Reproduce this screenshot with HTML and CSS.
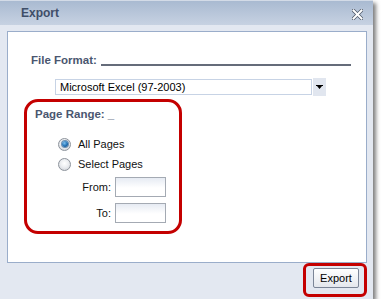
FILE: index.html
```html
<!DOCTYPE html>
<html>
<head>
<meta charset="utf-8">
<link rel="stylesheet" href="styles.css">
</head>
<body>
<div class="dialog">
  <div class="titlebar">
    <span class="title">Export</span>
    <svg class="close" width="11" height="11" viewBox="0 0 11 11">
      <path d="M1.5 1.5 L9.5 9.5 M9.5 1.5 L1.5 9.5" stroke="#4b5566" stroke-width="3.4" stroke-linecap="square"/>
      <path d="M1.5 1.5 L9.5 9.5 M9.5 1.5 L1.5 9.5" stroke="#ffffff" stroke-width="2" stroke-linecap="square"/>
    </svg>
  </div>
  <div class="panel">
    <div class="format">
      <span class="label">File Format:</span>
      <span class="rule"></span>
    </div>
    <div class="selectrow">
      <div class="selectfield">Microsoft Excel (97-2003)</div>
      <div class="selectbtn">
        <svg width="7" height="5" viewBox="0 0 7 5"><path d="M0 0 H7 V1 H6 L3.5 4 L1 1 H0 Z" fill="#000"/></svg>
      </div>
    </div>
    <div class="range">
      <div class="label rangelabel">Page Range: _</div>
      <div class="radiorow"><span class="radio on"></span><span class="rtext">All Pages</span></div>
      <div class="radiorow"><span class="radio"></span><span class="rtext">Select Pages</span></div>
      <div class="fieldrow first"><span class="flabel">From:</span><span class="input"></span></div>
      <div class="fieldrow"><span class="flabel">To:</span><span class="input"></span></div>
    </div>
  </div>
  <div class="footer">
    <div class="btnmark">
      <button class="btn">Export</button>
    </div>
  </div>
</div>
</body>
</html>
```

FILE: styles.css
```css
html, body {
  margin: 0;
  padding: 0;
  background: #ffffff;
}
body {
  font-family: "Liberation Sans", Arial, sans-serif;
}
.dialog {
  width: 373px;
  height: 299px;
  box-sizing: border-box;
  background: #e3e8f1;
  box-shadow: 3px 3px 4px rgba(0, 0, 0, 0.5);
  display: flex;
  flex-direction: column;
}
.titlebar {
  height: 25px;
  box-sizing: border-box;
  border-top: 1px solid #d3dbe7;
  background: linear-gradient(#a9bad1, #c7d2e2);
  display: flex;
  align-items: center;
  justify-content: space-between;
  padding: 0 10px 0 21px;
}
.title {
  font-weight: bold;
  font-size: 12px;
  line-height: 14px;
  color: #3f4e68;
}
.close {
  display: block;
  margin-top: 3px;
}
.panel {
  margin: 6px 6px 0 7px;
  height: 232px;
  box-sizing: border-box;
  border: 1px solid #9aadca;
  background: #ffffff;
}
.label {
  font-weight: bold;
  font-size: 11.5px;
  line-height: 14px;
  color: #4a5670;
}
.format {
  display: flex;
  align-items: flex-end;
  margin-top: 21px;
  padding: 0 15px 0 23px;
}
.rule {
  flex: 1;
  margin-left: 4px;
  margin-bottom: 1px;
  border-bottom: 2px solid #656c7a;
}
.selectrow {
  display: flex;
  align-items: center;
  margin: 11px 0 0 47px;
}
.selectfield {
  width: 257px;
  height: 16px;
  box-sizing: border-box;
  border: 1px solid #c7d3e5;
  font-size: 11px;
  line-height: 14px;
  padding-left: 4px;
  color: #000;
}
.selectbtn {
  width: 13px;
  height: 18px;
  margin-left: 1px;
  background: #e1e6ef;
  display: flex;
  align-items: center;
  justify-content: center;
}
.selectbtn svg {
  display: block;
}
.range {
  margin: 3px 0 0 16px;
  width: 158px;
  height: 135px;
  box-sizing: border-box;
  border: 3px solid #c40000;
  border-radius: 14px;
  padding: 5px 0 0 8px;
}
.rangelabel {
  margin-bottom: 13px;
}
.radiorow {
  height: 20px;
  display: flex;
  align-items: center;
  padding-left: 23px;
}
.radio {
  width: 13px;
  height: 13px;
  box-sizing: border-box;
  border-radius: 50%;
  border: 1px solid #8d939c;
  background: radial-gradient(circle at 50% 40%, #ffffff 0%, #eceef1 45%, #c9ccd2 100%);
  display: flex;
  align-items: center;
  justify-content: center;
}
.radio.on::after {
  content: "";
  width: 6px;
  height: 6px;
  border-radius: 50%;
  background: radial-gradient(circle at 40% 35%, #7fc0ee 0%, #1f6fb4 55%, #0e3f72 100%);
  box-shadow: 0 0 0 1px #6d8fb2;
}
.rtext {
  margin-left: 7px;
  font-size: 11px;
  line-height: 14px;
  color: #111;
}
.fieldrow {
  display: flex;
  align-items: center;
  margin-top: 6px;
}
.fieldrow.first {
  margin-top: 3px;
}
.flabel {
  width: 76px;
  text-align: right;
  font-size: 11px;
  line-height: 14px;
  color: #111;
}
.input {
  margin-left: 4px;
  width: 51px;
  height: 20px;
  box-sizing: border-box;
  border: 1px solid #a4aab3;
  background: linear-gradient(#e6ebf3, #ffffff 55%);
}
.footer {
  display: flex;
  justify-content: flex-end;
  padding-right: 6px;
}
.btnmark {
  width: 64px;
  height: 34px;
  box-sizing: border-box;
  border: 3px solid #c40000;
  border-radius: 6px;
  padding: 2px 0 0 7px;
}
.btn {
  display: block;
  width: 46px;
  height: 20px;
  box-sizing: border-box;
  border: 1px solid #7b8597;
  border-radius: 2px;
  background: linear-gradient(#ffffff, #e4e7ed);
  font-family: "Liberation Sans", Arial, sans-serif;
  font-size: 11px;
  line-height: 16px;
  padding: 0;
  color: #000;
}
```
